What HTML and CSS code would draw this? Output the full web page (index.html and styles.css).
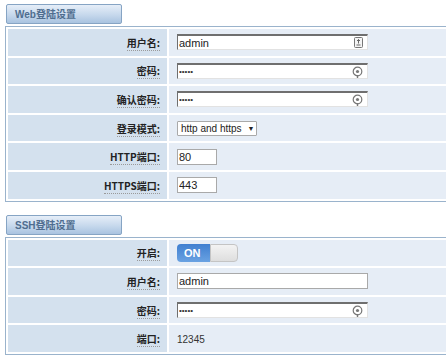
FILE: index.html
```html
<!DOCTYPE html>
<html lang="zh-CN">
<head>
    <meta charset="UTF-8">
    <title>登陆设置</title>
    <link rel="stylesheet" href="styles.css">
</head>
<body>
    <!-- Web login -->
    <div class="section">
        <div class="tab">Web登陆设置</div>
        <table class="form-table">
            <tr>
                <td class="label"><span>用户名:</span></td>
                <td class="value">
                    <div class="field wide">
                        <input type="text" value="admin" class="dark">
                        <svg class="field-icon" width="9" height="11" viewBox="0 0 9 11">
                            <rect x="0.5" y="0.5" width="8" height="10" rx="1" fill="#f4f4f4" stroke="#777"/>
                            <path d="M4.5 2.5v4M3 4l1.5-1.5L6 4" fill="none" stroke="#666"/>
                            <rect x="2.5" y="7.5" width="4" height="1" fill="#666"/>
                        </svg>
                    </div>
                </td>
            </tr>
            <tr>
                <td class="label"><span>密码:</span></td>
                <td class="value">
                    <div class="field wide">
                        <input type="password" value="admin" class="dark">
                        <svg class="field-icon" width="11" height="12" viewBox="0 0 11 12">
                            <circle cx="5.5" cy="5.5" r="4.3" fill="none" stroke="#777" stroke-width="1.2"/>
                            <circle cx="5.5" cy="5.5" r="1.6" fill="#777"/>
                            <path d="M5.5 9v3" stroke="#777" stroke-width="1.4"/>
                        </svg>
                    </div>
                </td>
            </tr>
            <tr>
                <td class="label"><span>确认密码:</span></td>
                <td class="value">
                    <div class="field wide">
                        <input type="password" value="admin" class="dark">
                        <svg class="field-icon" width="11" height="12" viewBox="0 0 11 12">
                            <circle cx="5.5" cy="5.5" r="4.3" fill="none" stroke="#777" stroke-width="1.2"/>
                            <circle cx="5.5" cy="5.5" r="1.6" fill="#777"/>
                            <path d="M5.5 9v3" stroke="#777" stroke-width="1.4"/>
                        </svg>
                    </div>
                </td>
            </tr>
            <tr>
                <td class="label"><span>登录模式:</span></td>
                <td class="value">
                    <div class="select">http and https <span class="arrow">▼</span></div>
                </td>
            </tr>
            <tr>
                <td class="label"><span>HTTP端口:</span></td>
                <td class="value"><input type="text" value="80" class="short"></td>
            </tr>
            <tr>
                <td class="label"><span>HTTPS端口:</span></td>
                <td class="value"><input type="text" value="443" class="short"></td>
            </tr>
        </table>
    </div>

    <!-- SSH login -->
    <div class="section">
        <div class="tab">SSH登陆设置</div>
        <table class="form-table">
            <tr>
                <td class="label"><span>开启:</span></td>
                <td class="value">
                    <div class="toggle"><span class="toggle-on">ON</span><span class="toggle-off"></span></div>
                </td>
            </tr>
            <tr>
                <td class="label"><span>用户名:</span></td>
                <td class="value">
                    <div class="field wide"><input type="text" value="admin"></div>
                </td>
            </tr>
            <tr>
                <td class="label"><span>密码:</span></td>
                <td class="value">
                    <div class="field wide">
                        <input type="password" value="admin" class="dark">
                        <svg class="field-icon" width="11" height="12" viewBox="0 0 11 12">
                            <circle cx="5.5" cy="5.5" r="4.3" fill="none" stroke="#777" stroke-width="1.2"/>
                            <circle cx="5.5" cy="5.5" r="1.6" fill="#777"/>
                            <path d="M5.5 9v3" stroke="#777" stroke-width="1.4"/>
                        </svg>
                    </div>
                </td>
            </tr>
            <tr>
                <td class="label"><span>端口:</span></td>
                <td class="value"><span class="static">12345</span></td>
            </tr>
        </table>
    </div>
</body>
</html>
```

FILE: styles.css
```css
/* Global */
* {
    margin: 0;
    padding: 0;
    box-sizing: border-box;
}

body {
    background: #ffffff;
    font-family: 'Liberation Sans', Arial, 'Noto Sans CJK SC', sans-serif;
    color: #333333;
    overflow: hidden;
    padding-left: 5px;
}

/* Section tab */
.section {
    margin-top: 4px;
    margin-bottom: 13px;
}

.tab {
    width: 116px;
    height: 20px;
    margin-left: 1px;
    margin-bottom: 2px;
    padding-left: 8px;
    line-height: 19px;
    font-size: 10px;
    font-weight: bold;
    color: #4f6d8f;
    font-family: 'Liberation Sans', 'Noto Sans CJK SC', sans-serif;
    background: linear-gradient(#e6eef8, #c6d8ec 55%, #a9c3e0);
    border: 1px solid #86a4c4;
    border-radius: 2px;
}

/* Form table */
.form-table {
    width: 470px;
    border: 1px solid #9ab3cc;
    border-spacing: 2px;
}

.form-table td {
    height: 26.6px;
}

.label {
    width: 159px;
    background: #d4e1ee;
    text-align: right;
    padding-right: 7px;
    font-family: 'Noto Sans CJK SC', sans-serif;
    font-size: 10px;
    font-weight: bold;
    color: #222222;
}

.label span {
    border-bottom: 1px dotted #9a9a9a;
}

.value {
    background: #e6edf6;
    padding-left: 8px;
    font-size: 11px;
}

/* Inputs */
.field {
    position: relative;
    width: 191px;
}

.field input {
    width: 100%;
}

input {
    height: 16px;
    font-family: 'Liberation Sans', Arial, sans-serif;
    font-size: 11px;
    color: #222;
    padding: 0 1px;
    border: 1px solid #a9a9a9;
    background: #ffffff;
    display: block;
}

input.dark {
    border-color: #6f6f6f #e2e2e2 #e2e2e2 #6f6f6f;
    border-top-width: 2px;
}

input[type="password"] {
    font-size: 8px;
    color: #333;
}

input.short {
    width: 40px;
}

.field-icon {
    position: absolute;
    right: 5px;
    top: 3px;
}

/* Select */
.select {
    display: inline-block;
    width: 80px;
    height: 15px;
    line-height: 13px;
    padding-left: 3px;
    font-size: 10px;
    color: #222;
    background: #ffffff;
    border: 1px solid #a9a9a9;
    border-radius: 1px;
}

.select .arrow {
    font-size: 7px;
    margin-left: 3px;
    vertical-align: 1px;
}

/* Toggle */
.toggle {
    display: flex;
    width: 61px;
    height: 18px;
}

.toggle-on {
    width: 33px;
    background: linear-gradient(#3f7fd0, #6aa2e2);
    color: #ffffff;
    font-weight: bold;
    font-size: 11px;
    line-height: 18px;
    padding-left: 7px;
    border-radius: 4px 0 0 4px;
}

.toggle-off {
    flex: 1;
    background: linear-gradient(#f3f3f3, #dedede);
    border: 1px solid #c4c4c4;
    border-radius: 0 4px 4px 0;
}

.static {
    font-size: 10px;
    color: #333;
}
```
